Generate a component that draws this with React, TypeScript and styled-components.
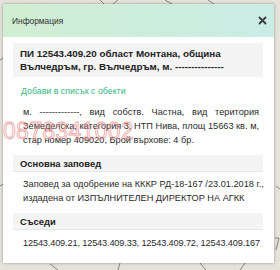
import React from 'react';
import styled, { createGlobalStyle } from 'styled-components';

const GlobalStyle = createGlobalStyle`
  html, body {
    margin: 0;
    padding: 0;
    background: #e6e4da;
    font-family: 'Liberation Sans', Arial, sans-serif;
  }
`;

const Page = styled.div`
  position: relative;
  width: 280px;
  height: 270px;
  overflow: hidden;
  padding: 4px 0 0 3px;
  box-sizing: border-box;
`;

const MapLayer = styled.svg`
  position: absolute;
  left: 0;
  top: 0;
  width: 280px;
  height: 270px;
`;

const Modal = styled.div`
  position: relative;
  width: 271px;
  height: 259px;
  background: #ffffff;
  box-shadow: 0 0 3px rgba(0, 0, 0, 0.35);
  display: flex;
  flex-direction: column;
`;

const Header = styled.div`
  height: 33px;
  display: flex;
  align-items: center;
  justify-content: space-between;
  padding: 0 7px 0 9px;
  background: linear-gradient(90deg, #d0eed2 0%, #c9ece5 100%);
`;

const Title = styled.div`
  font-size: 8.4px;
  color: #333333;
`;

const CloseButton = styled.svg`
  width: 9px;
  height: 9px;
`;

const Body = styled.div`
  padding: 6px 11px 0 10px;
  display: flex;
  flex-direction: column;
`;

const TitleBox = styled.div`
  background: #f4f4f4;
  padding: 4px 7px;
  font-size: 9.8px;
  font-weight: bold;
  line-height: 13px;
  color: #222222;
`;

const AddLink = styled.div`
  margin: 8px 0 0 8px;
  font-size: 8.8px;
  line-height: 13px;
  color: #35b783;
`;

const Paragraph = styled.div<{ $top: number }>`
  margin-top: ${(p) => p.$top}px;
  padding: 0 4px 0 10px;
  font-size: 9.2px;
  line-height: 14px;
  color: #2a2a2a;
`;

const Line = styled.div<{ $justify?: boolean; $tight?: boolean }>`
  white-space: nowrap;
  letter-spacing: ${(p) => (p.$tight ? '-0.15px' : 'normal')};
  text-align: ${(p) => (p.$justify ? 'justify' : 'left')};
  text-align-last: ${(p) => (p.$justify ? 'justify' : 'left')};
`;

const SectionHeader = styled.div`
  margin-top: 8px;
  height: 16px;
  padding: 0 7px;
  display: flex;
  align-items: center;
  background: #f4f4f4;
  border-bottom: 1px solid #e2e8ee;
  font-size: 9.4px;
  font-weight: bold;
  color: #222222;
`;

const Watermark = styled.div`
  position: absolute;
  left: 0;
  top: 114px;
  font-size: 23px;
  letter-spacing: 0.3px;
  color: rgba(255, 230, 230, 0.25);
  -webkit-text-stroke: 0.8px rgba(220, 95, 95, 0.6);
  pointer-events: none;
`;

export default function App() {
  return (
    <>
      <GlobalStyle />
      <Page>
        <MapLayer viewBox="0 0 280 270">
          <g stroke="#6d6d66" strokeWidth="0.8" fill="none">
            <path d="M100 0 L104 4" />
            <path d="M118 0 L113 4" />
            <path d="M165 0 L172 4" />
            <path d="M208 0 L214 4" />
            <path d="M0 60 L3 58" />
            <path d="M0 186 L3 184" />
            <path d="M276 186 L280 189" />
            <path d="M50 264 L58 270" />
            <path d="M120 263 L118 270" />
            <path d="M200 263 L206 270" />
            <path d="M245 263 L240 270" />
            <path d="M275 238 L279 238 L276 250" />
          </g>
        </MapLayer>
        <Modal>
          <Header>
            <Title>Информация</Title>
            <CloseButton viewBox="0 0 9 9">
              <path d="M1.5 1.5 L7.5 7.5 M7.5 1.5 L1.5 7.5" stroke="#3a3a3a" strokeWidth="1.8" strokeLinecap="round" />
            </CloseButton>
          </Header>
          <Body>
            <TitleBox>
              ПИ 12543.409.20 област Монтана, община
              <br />
              Вълчедръм, гр. Вълчедръм, м. ---------------
            </TitleBox>
            <AddLink>Добави в списък с обекти</AddLink>
            <Paragraph $top={7}>
              <Line $justify>м. -------------, вид собств. Частна, вид територия</Line>
              <Line $justify>Земеделска, категория 3, НТП Нива, площ 15663 кв. м,</Line>
              <Line>стар номер 409020, Брой върхове: 4 бр.</Line>
            </Paragraph>
            <SectionHeader>Основна заповед</SectionHeader>
            <Paragraph $top={5}>
              <Line>Заповед за одобрение на КККР РД-18-167 /23.01.2018 г.,</Line>
              <Line>издадена от ИЗПЪЛНИТЕЛЕН ДИРЕКТОР НА АГКК</Line>
            </Paragraph>
            <SectionHeader>Съседи</SectionHeader>
            <Paragraph $top={6}>
              <Line $tight>12543.409.21, 12543.409.33, 12543.409.72, 12543.409.167</Line>
            </Paragraph>
          </Body>
          <Watermark>0878341002</Watermark>
        </Modal>
      </Page>
    </>
  );
}
